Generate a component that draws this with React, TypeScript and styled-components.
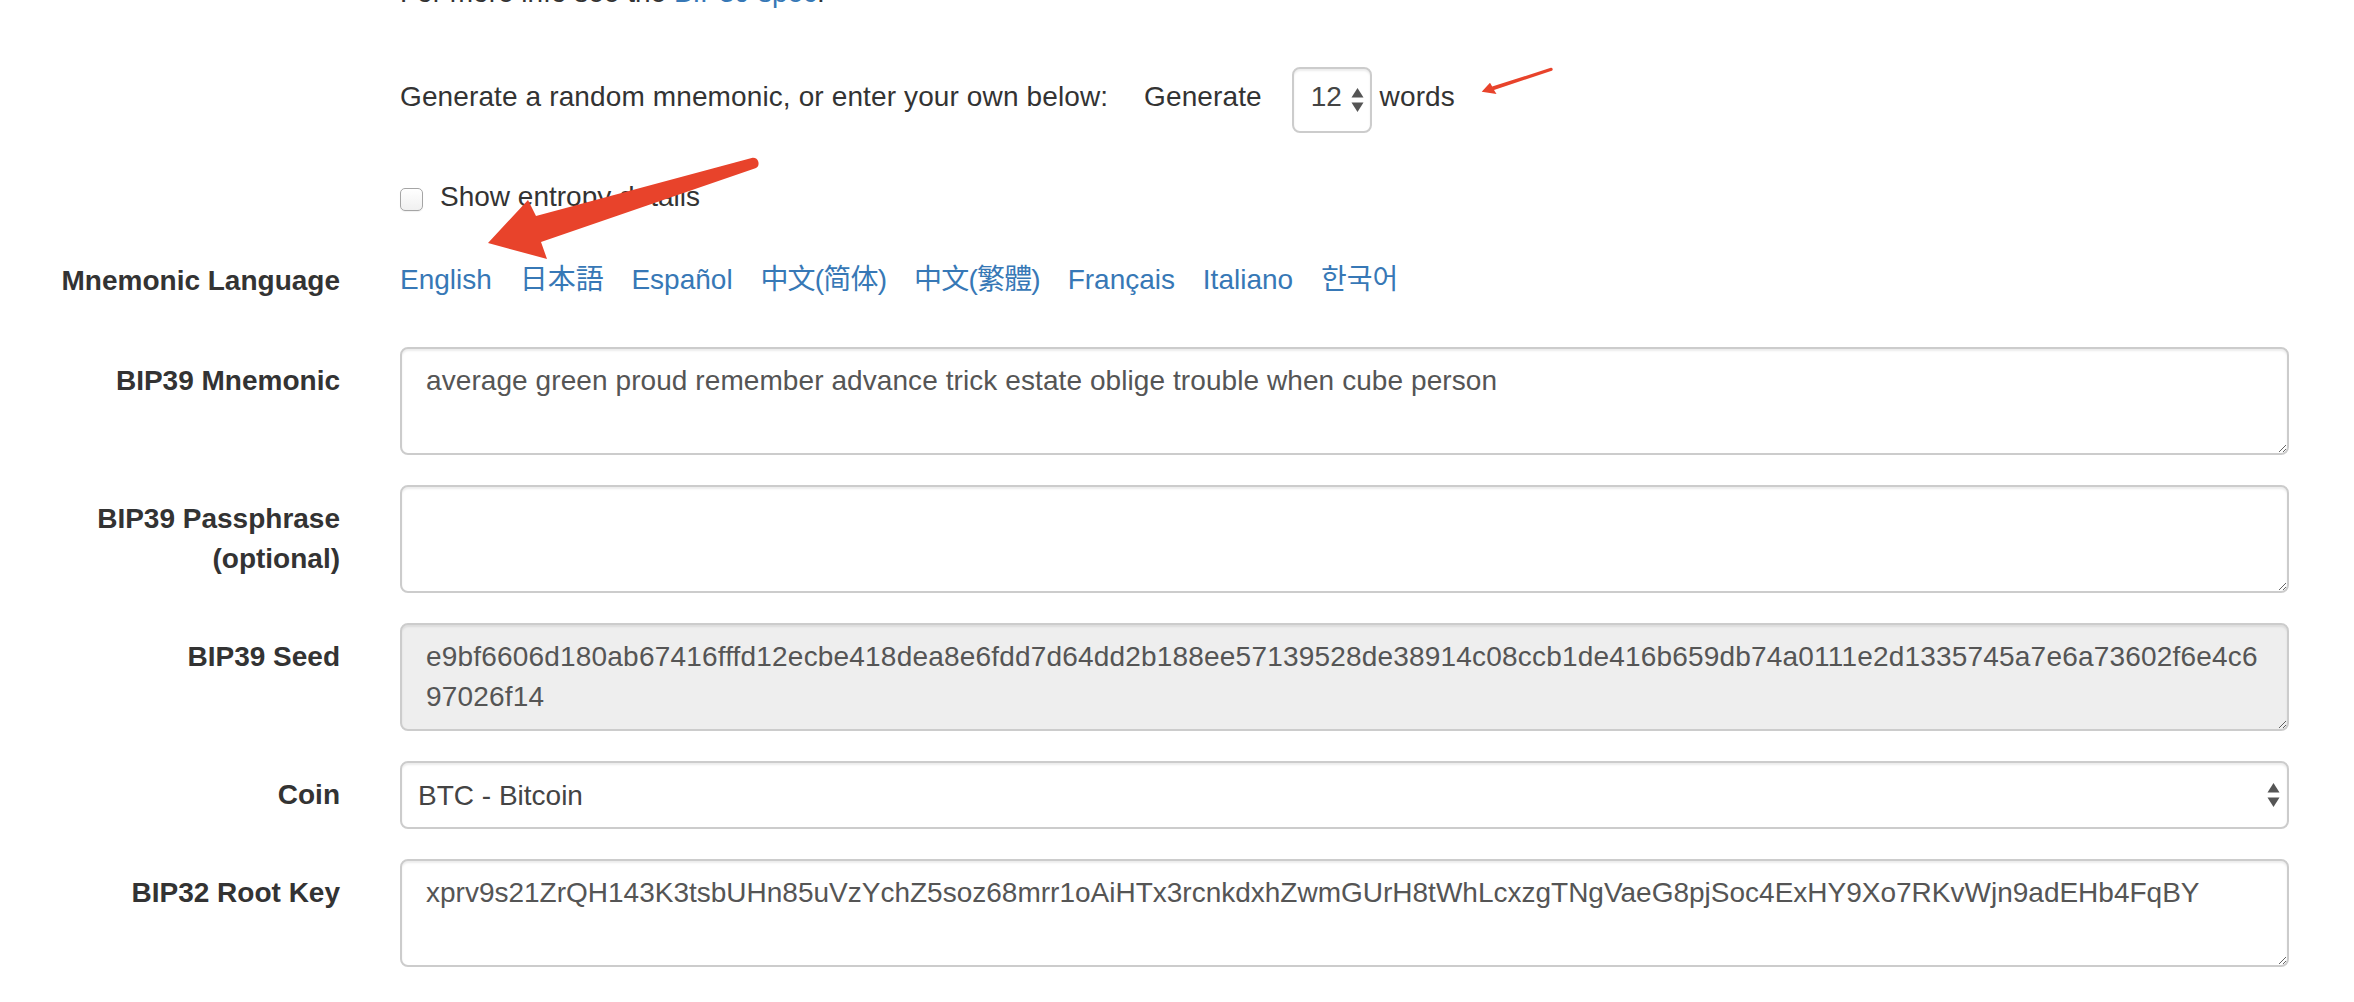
import React from "react";
import styled, { createGlobalStyle } from "styled-components";

const GlobalStyle = createGlobalStyle`
  html, body { margin: 0; padding: 0; background: #fff; }
  body {
    font-family: "Liberation Sans", Helvetica, Arial, "Noto Sans CJK SC", sans-serif;
    font-size: 28px;
    line-height: 40px;
    color: #333;
    overflow: hidden;
  }
  *, *::before, *::after { box-sizing: border-box; }
`;

const Page = styled.div`
  position: relative;
  width: 2354px;
  height: 1002px;
  overflow: hidden;
  background: #fff;
`;

const Form = styled.form`
  display: flex;
  flex-direction: column;
  padding-right: 65px;
`;

const Group = styled.div<{ $mt?: number; $mb?: number }>`
  display: grid;
  grid-template-columns: 370px 1fr;
  margin-top: ${(p) => p.$mt ?? 0}px;
  margin-bottom: ${(p) => p.$mb ?? 30}px;
`;

const Label = styled.label`
  padding: 14px 30px 0 10px;
  text-align: right;
  font-weight: 700;
  color: #333;
`;

const Field = styled.div<{ $pt?: number; $pb?: number }>`
  padding-left: 30px;
  padding-top: ${(p) => p.$pt ?? 0}px;
  padding-bottom: ${(p) => p.$pb ?? 0}px;
  min-width: 0;
`;

const Intro = styled.p`
  margin: 0;
`;

const Link = styled.a<{ $cjk?: string; $tight?: boolean }>`
  color: #3778b6;
  text-decoration: none;
  letter-spacing: ${(p) => (p.$tight ? "-0.8px" : "normal")};
  font-family: "Liberation Sans", Helvetica, Arial,
    ${(p) => (p.$cjk ? `"${p.$cjk}",` : "")} sans-serif;
`;

const GenLine = styled.div`
  white-space: nowrap;
  letter-spacing: 0.12px;
`;

const GenButton = styled.button`
  appearance: none;
  margin: 0;
  padding: 0 20px 0 26px;
  border: 2px solid transparent;
  background: transparent;
  font: inherit;
  letter-spacing: inherit;
  line-height: 40px;
  color: #333;
  vertical-align: baseline;
`;

const SelectWrap = styled.span<{ $block?: boolean }>`
  position: relative;
  display: ${(p) => (p.$block ? "flex" : "inline-flex")};
  vertical-align: baseline;
  letter-spacing: normal;
`;

const Select = styled.select<{ $w?: string; $h: number; $pl: number; $pr: number; $pb?: number }>`
  appearance: none;
  -webkit-appearance: none;
  width: ${(p) => p.$w ?? "100%"};
  height: ${(p) => p.$h}px;
  margin: 0;
  padding: 0 ${(p) => p.$pr}px ${(p) => p.$pb ?? 0}px ${(p) => p.$pl}px;
  border: 2px solid #ccc;
  border-radius: 8px;
  background: #fff;
  box-shadow: inset 0 2px 2px rgba(0, 0, 0, 0.075);
  font-family: "Liberation Sans", Helvetica, Arial, sans-serif;
  font-size: 28px;
  color: #444;
  outline: none;
`;

const SpinnerIcon = styled.svg<{ $right: number }>`
  position: absolute;
  right: ${(p) => p.$right}px;
  top: 50%;
  width: 13px;
  height: 25px;
  transform: translateY(-50%);
  pointer-events: none;
`;

const Spinner = ({ right }: { right: number }) => (
  <SpinnerIcon $right={right} viewBox="0 0 13 25">
    <path d="M0.5 10 L6.5 0.5 L12.5 10 Z" fill="#555" />
    <path d="M0.5 15 L12.5 15 L6.5 24.5 Z" fill="#555" />
  </SpinnerIcon>
);

const CheckLabel = styled.label`
  display: flex;
  align-items: center;
  gap: 17px;
  font-weight: 400;
`;

const CheckBox = styled.input`
  appearance: none;
  -webkit-appearance: none;
  width: 23px;
  height: 23px;
  margin: 4px 0 0 0;
  border: 1.5px solid #a5a5a5;
  border-radius: 5px;
  background: linear-gradient(#ffffff, #f0f0f0);
  box-shadow: 0 1px 1px rgba(0, 0, 0, 0.06);
`;

const Languages = styled.div`
  white-space: nowrap;
  ${Link} + ${Link} {
    margin-left: 20px;
  }
`;

const Area = styled.textarea<{ $readonly?: boolean; $ls?: number }>`
  display: block;
  width: 100%;
  height: 108px;
  margin: 0;
  padding: 12px 24px;
  border: 2px solid #ccc;
  border-radius: 8px;
  background: ${(p) => (p.$readonly ? "#eee" : "#fff")};
  box-shadow: inset 0 2px 2px rgba(0, 0, 0, 0.075);
  font-family: "Liberation Sans", Helvetica, Arial, sans-serif;
  font-size: 28px;
  line-height: 40px;
  letter-spacing: ${(p) => p.$ls ?? 0}px;
  color: #555;
  resize: vertical;
  outline: none;
  overflow: auto;
`;

const Annotation = styled.svg`
  position: absolute;
  left: 0;
  top: 0;
  width: 2354px;
  height: 1002px;
  pointer-events: none;
`;

const languages: { name: string; cjk?: string; tight?: boolean }[] = [
  { name: "English" },
  { name: "日本語", cjk: "Noto Sans CJK JP" },
  { name: "Español" },
  { name: "中文(简体)", cjk: "Noto Sans CJK SC", tight: true },
  { name: "中文(繁體)", cjk: "Noto Sans CJK TC", tight: true },
  { name: "Français" },
  { name: "Italiano" },
  { name: "한국어", cjk: "Noto Sans CJK KR" },
];

const seed =
  "e9bf6606d180ab67416fffd12ecbe418dea8e6fdd7d64dd2b188ee57139528de38914c08ccb1de416b659db74a0111e2d1335745a7e6a73602f6e4c697026f14";
const rootKey =
  "xprv9s21ZrQH143K3tsbUHn85uVzYchZ5soz68mrr1oAiHTx3rcnkdxhZwmGUrH8tWhLcxzgTNgVaeG8pjSoc4ExHY9Xo7RKvWjn9adEHb4FqBY";

export default function App() {
  return (
    <>
      <GlobalStyle />
      <Page>
        <Form onSubmit={(e) => e.preventDefault()}>
          <Group $mt={-27} $mb={0}>
            <div />
            <Field>
              <Intro>
                For more info see the <Link href="#bip39">BIP39 spec</Link>.
              </Intro>
            </Field>
          </Group>

          <Group $mt={54}>
            <div />
            <Field>
              <GenLine>
                <span>Generate a random mnemonic, or enter your own below</span>:{" "}
                <GenButton type="button">Generate</GenButton>{" "}
                <SelectWrap>
                  <Select $w="80px" $h={66} $pl={17} $pr={0} $pb={8} defaultValue="12">
                    <option value="3">3</option>
                    <option value="6">6</option>
                    <option value="9">9</option>
                    <option value="12">12</option>
                    <option value="15">15</option>
                    <option value="18">18</option>
                    <option value="21">21</option>
                    <option value="24">24</option>
                  </Select>
                  <Spinner right={8} />
                </SelectWrap>{" "}
                <span>words</span>
              </GenLine>
            </Field>
          </Group>

          <Group>
            <div />
            <Field $pt={14}>
              <CheckLabel>
                <CheckBox type="checkbox" />
                Show entropy details
              </CheckLabel>
            </Field>
          </Group>

          <Group>
            <Label>Mnemonic Language</Label>
            <Field $pt={13} $pb={17}>
              <Languages>
                {languages.map((l, i) => (
                  <React.Fragment key={l.name}>
                    {i > 0 ? " " : null}
                    <Link href={`#${l.name}`} $cjk={l.cjk} $tight={l.tight}>
                      {l.name}
                    </Link>
                  </React.Fragment>
                ))}
              </Languages>
            </Field>
          </Group>

          <Group>
            <Label>BIP39 Mnemonic</Label>
            <Field>
              <Area
                $ls={0.08}
                defaultValue="average green proud remember advance trick estate oblige trouble when cube person"
              />
            </Field>
          </Group>

          <Group>
            <Label>BIP39 Passphrase (optional)</Label>
            <Field>
              <Area defaultValue="" />
            </Field>
          </Group>

          <Group>
            <Label>BIP39 Seed</Label>
            <Field>
              <Area $readonly $ls={0.19} readOnly defaultValue={seed} />
            </Field>
          </Group>

          <Group>
            <Label>Coin</Label>
            <Field>
              <SelectWrap $block>
                <Select $h={68} $pl={16} $pr={40} defaultValue="0">
                  <option value="0">BTC - Bitcoin</option>
                  <option value="1">BTC - Bitcoin Testnet</option>
                  <option value="2">LTC - Litecoin</option>
                </Select>
                <Spinner right={9} />
              </SelectWrap>
            </Field>
          </Group>

          <Group>
            <Label>BIP32 Root Key</Label>
            <Field>
              <Area readOnly defaultValue={rootKey} />
            </Field>
          </Group>
        </Form>

        <Annotation viewBox="0 0 2354 1002">
          <path
            d="M488 243 L528 200 L536 216 L752.6 157.7 A5.6 5.6 0 0 1 755.4 168.3 L541 242 L547 259 Z"
            fill="#e8432b"
          />
          <path
            d="M1481.7 91.7 L1490 82.7 L1492.2 86.6 L1550.8 67.8 A1.6 1.6 0 0 1 1551.8 70.8 L1494 90 L1496.5 94 Z"
            fill="#e8432b"
          />
        </Annotation>
      </Page>
    </>
  );
}
